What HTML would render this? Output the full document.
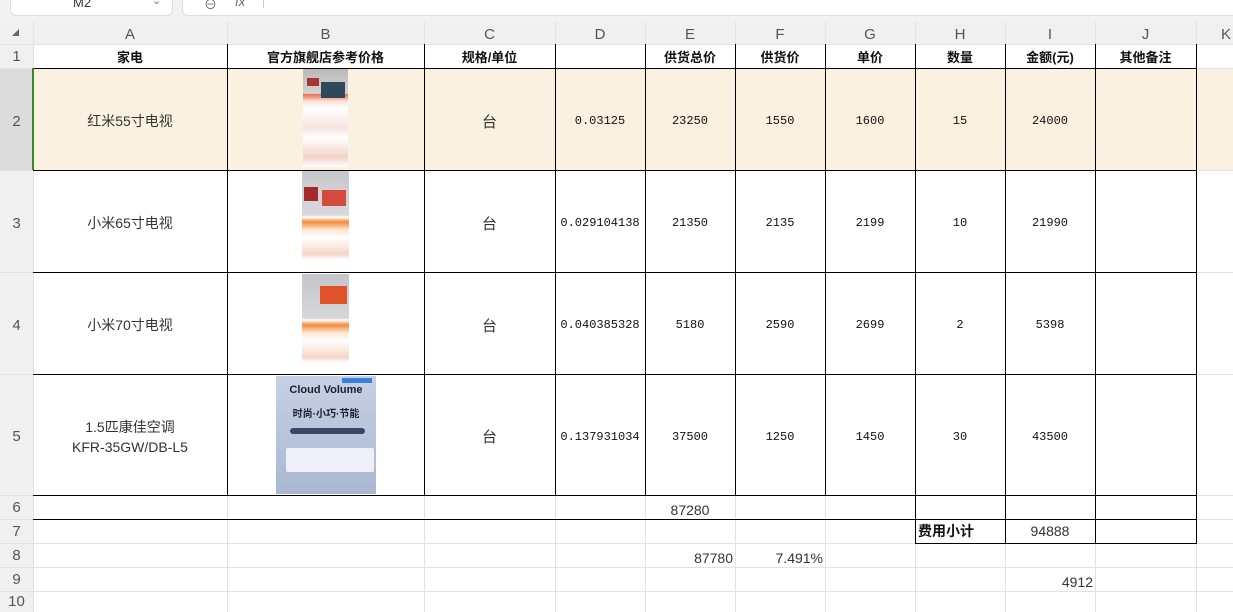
<!DOCTYPE html>
<html><head><meta charset="utf-8"><style>
body{margin:0;width:1233px;height:612px;overflow:hidden;background:#fff;position:relative;font-family:"Liberation Sans","Noto Sans CJK SC",sans-serif;}
.a{position:absolute}
.c{position:absolute;display:flex;align-items:center;justify-content:center;text-align:center;color:#222}
.gv{position:absolute;width:1px;background:#e2e2e2}
.gh{position:absolute;height:1px;background:#e2e2e2}
.bv{position:absolute;width:1px;background:#000}
.bh{position:absolute;height:1px;background:#000}
.hd{font-size:15px;color:#555;}
.h1{font-weight:bold;font-size:13px;color:#111}
.m{font-family:"Liberation Mono",monospace;font-size:12px;color:#111;padding-top:4px;box-sizing:border-box}
.n{font-size:14px;color:#333}
.d{padding-top:4px;box-sizing:border-box}
</style></head><body>
<div class="a" style="left:0;top:0;width:1233px;height:22px;background:#f2f2f2"></div>
<div class="a" style="left:10px;top:-6px;width:161px;height:20px;background:#fff;border:1px solid #ddd;border-radius:6px"></div>
<div class="a" style="left:73px;top:-5px;font-size:13px;color:#333">M2</div>
<div class="a" style="left:152px;top:-6px;font-size:11px;color:#777">⌄</div>
<div class="a" style="left:182px;top:-6px;width:1060px;height:20px;background:#fff;border:1px solid #ddd;border-radius:6px"></div>
<div class="a" style="left:204px;top:-6px;font-size:13px;color:#666">⊖</div>
<div class="a" style="left:235px;top:-6px;font-size:13px;color:#666;font-style:italic">fx</div>
<div class="a" style="left:263px;top:-2px;width:1px;height:10px;background:#ccc"></div>
<div class="a" style="left:0;top:22px;width:1233px;height:22px;background:#f0f0f0"></div>
<div class="a" style="left:0;top:44px;width:33px;height:568px;background:#f0f0f0"></div>
<div class="a" style="left:0;top:68px;width:33px;height:102px;background:#dcdcdc"></div>
<div class="a" style="left:33px;top:68px;width:1200px;height:102px;background:#faf1e0"></div>
<div class="a" style="left:12px;top:29px;width:0;height:0;border-left:7px solid transparent;border-bottom:7px solid #666"></div>
<div class="gv" style="left:33px;top:22px;height:590px"></div>
<div class="gv" style="left:227px;top:22px;height:590px"></div>
<div class="gv" style="left:424px;top:22px;height:590px"></div>
<div class="gv" style="left:555px;top:22px;height:590px"></div>
<div class="gv" style="left:645px;top:22px;height:590px"></div>
<div class="gv" style="left:735px;top:22px;height:590px"></div>
<div class="gv" style="left:825px;top:22px;height:590px"></div>
<div class="gv" style="left:915px;top:22px;height:590px"></div>
<div class="gv" style="left:1005px;top:22px;height:590px"></div>
<div class="gv" style="left:1095px;top:22px;height:590px"></div>
<div class="gv" style="left:1196px;top:22px;height:590px"></div>
<div class="gh" style="left:0;top:44px;width:1233px"></div>
<div class="gh" style="left:0;top:68px;width:1233px"></div>
<div class="gh" style="left:0;top:170px;width:1233px"></div>
<div class="gh" style="left:0;top:272px;width:1233px"></div>
<div class="gh" style="left:0;top:374px;width:1233px"></div>
<div class="gh" style="left:0;top:495px;width:1233px"></div>
<div class="gh" style="left:0;top:519px;width:1233px"></div>
<div class="gh" style="left:0;top:543px;width:1233px"></div>
<div class="gh" style="left:0;top:567px;width:1233px"></div>
<div class="gh" style="left:0;top:591px;width:1233px"></div>
<div class="bh" style="left:33px;top:68px;width:1164px"></div>
<div class="bh" style="left:33px;top:170px;width:1164px"></div>
<div class="bh" style="left:33px;top:272px;width:1164px"></div>
<div class="bh" style="left:33px;top:374px;width:1164px"></div>
<div class="bh" style="left:33px;top:495px;width:1164px"></div>
<div class="bh" style="left:33px;top:519px;width:1164px"></div>
<div class="bh" style="left:915px;top:543px;width:282px"></div>
<div class="bv" style="left:227px;top:44px;height:451px"></div>
<div class="bv" style="left:424px;top:44px;height:451px"></div>
<div class="bv" style="left:555px;top:44px;height:451px"></div>
<div class="bv" style="left:645px;top:44px;height:451px"></div>
<div class="bv" style="left:735px;top:44px;height:451px"></div>
<div class="bv" style="left:825px;top:44px;height:451px"></div>
<div class="bv" style="left:915px;top:44px;height:499px"></div>
<div class="bv" style="left:1005px;top:44px;height:499px"></div>
<div class="bv" style="left:1095px;top:44px;height:499px"></div>
<div class="bv" style="left:1196px;top:44px;height:499px"></div>
<div class="a" style="left:32px;top:68px;width:2px;height:102px;background:#3a8a2a"></div>
<div class="c hd" style="left:33px;top:23px;width:194px;height:22px">A</div>
<div class="c hd" style="left:227px;top:23px;width:197px;height:22px">B</div>
<div class="c hd" style="left:424px;top:23px;width:131px;height:22px">C</div>
<div class="c hd" style="left:555px;top:23px;width:90px;height:22px">D</div>
<div class="c hd" style="left:645px;top:23px;width:90px;height:22px">E</div>
<div class="c hd" style="left:735px;top:23px;width:90px;height:22px">F</div>
<div class="c hd" style="left:825px;top:23px;width:90px;height:22px">G</div>
<div class="c hd" style="left:915px;top:23px;width:90px;height:22px">H</div>
<div class="c hd" style="left:1005px;top:23px;width:90px;height:22px">I</div>
<div class="c hd" style="left:1095px;top:23px;width:101px;height:22px">J</div>
<div class="c hd" style="left:1196px;top:23px;width:60px;height:22px">K</div>
<div class="c hd" style="left:0;top:44px;width:33px;height:24px">1</div>
<div class="c hd d" style="left:0;top:68px;width:33px;height:102px">2</div>
<div class="c hd d" style="left:0;top:170px;width:33px;height:102px">3</div>
<div class="c hd d" style="left:0;top:272px;width:33px;height:102px">4</div>
<div class="c hd d" style="left:0;top:374px;width:33px;height:121px">5</div>
<div class="c hd" style="left:0;top:495px;width:33px;height:24px">6</div>
<div class="c hd" style="left:0;top:519px;width:33px;height:24px">7</div>
<div class="c hd" style="left:0;top:543px;width:33px;height:24px">8</div>
<div class="c hd" style="left:0;top:567px;width:33px;height:24px">9</div>
<div class="c hd" style="left:0;top:591px;width:33px;height:21px">10</div>
<div class="c h1" style="left:33px;top:44px;width:194px;height:24px">家电</div>
<div class="c h1" style="left:227px;top:44px;width:197px;height:24px">官方旗舰店参考价格</div>
<div class="c h1" style="left:424px;top:44px;width:131px;height:24px">规格/单位</div>
<div class="c h1" style="left:645px;top:44px;width:90px;height:24px">供货总价</div>
<div class="c h1" style="left:735px;top:44px;width:90px;height:24px">供货价</div>
<div class="c h1" style="left:825px;top:44px;width:90px;height:24px">单价</div>
<div class="c h1" style="left:915px;top:44px;width:90px;height:24px">数量</div>
<div class="c h1" style="left:1005px;top:44px;width:90px;height:24px">金额(元)</div>
<div class="c h1" style="left:1095px;top:44px;width:101px;height:24px">其他备注</div>
<div class="c n d" style="left:33px;top:68px;width:194px;height:102px">红米55寸电视</div>
<div class="c n d" style="left:33px;top:170px;width:194px;height:102px">小米65寸电视</div>
<div class="c n d" style="left:33px;top:272px;width:194px;height:102px">小米70寸电视</div>
<div class="c n d" style="left:33px;top:374px;width:194px;height:121px;line-height:20px">1.5匹康佳空调<br>KFR-35GW/DB-L5</div>
<div class="c n d" style="left:424px;top:68px;width:131px;height:102px;font-size:15px">台</div>
<div class="c n d" style="left:424px;top:170px;width:131px;height:102px;font-size:15px">台</div>
<div class="c n d" style="left:424px;top:272px;width:131px;height:102px;font-size:15px">台</div>
<div class="c n d" style="left:424px;top:374px;width:131px;height:121px;font-size:15px">台</div>
<div class="c m" style="left:555px;top:68px;width:90px;height:102px">0.03125</div>
<div class="c m" style="left:645px;top:68px;width:90px;height:102px">23250</div>
<div class="c m" style="left:735px;top:68px;width:90px;height:102px">1550</div>
<div class="c m" style="left:825px;top:68px;width:90px;height:102px">1600</div>
<div class="c m" style="left:915px;top:68px;width:90px;height:102px">15</div>
<div class="c m" style="left:1005px;top:68px;width:90px;height:102px">24000</div>
<div class="c m" style="left:555px;top:170px;width:90px;height:102px">0.029104138</div>
<div class="c m" style="left:645px;top:170px;width:90px;height:102px">21350</div>
<div class="c m" style="left:735px;top:170px;width:90px;height:102px">2135</div>
<div class="c m" style="left:825px;top:170px;width:90px;height:102px">2199</div>
<div class="c m" style="left:915px;top:170px;width:90px;height:102px">10</div>
<div class="c m" style="left:1005px;top:170px;width:90px;height:102px">21990</div>
<div class="c m" style="left:555px;top:272px;width:90px;height:102px">0.040385328</div>
<div class="c m" style="left:645px;top:272px;width:90px;height:102px">5180</div>
<div class="c m" style="left:735px;top:272px;width:90px;height:102px">2590</div>
<div class="c m" style="left:825px;top:272px;width:90px;height:102px">2699</div>
<div class="c m" style="left:915px;top:272px;width:90px;height:102px">2</div>
<div class="c m" style="left:1005px;top:272px;width:90px;height:102px">5398</div>
<div class="c m" style="left:555px;top:374px;width:90px;height:121px">0.137931034</div>
<div class="c m" style="left:645px;top:374px;width:90px;height:121px">37500</div>
<div class="c m" style="left:735px;top:374px;width:90px;height:121px">1250</div>
<div class="c m" style="left:825px;top:374px;width:90px;height:121px">1450</div>
<div class="c m" style="left:915px;top:374px;width:90px;height:121px">30</div>
<div class="c m" style="left:1005px;top:374px;width:90px;height:121px">43500</div>
<div class="a" style="left:303px;top:69px;width:45px;height:98px;background:linear-gradient(#b9b9bd 0,#d4d2d0 25%,#f06a4a 26%,#fde2da 33%,#fff 40%,#f5e5e0 60%,#fff 70%,#f4d2c8 90%,#fff 100%)"></div>
<div class="a" style="left:307px;top:78px;width:12px;height:8px;background:#a33"></div>
<div class="a" style="left:321px;top:82px;width:24px;height:16px;background:#2c4a5a"></div>
<div class="a" style="left:302px;top:171px;width:47px;height:98px;background:linear-gradient(#c8c8cc 0,#d8d8de 45%,#fff 47%,#f58a3a 52%,#fde7d5 60%,#fff 68%,#f5d6c6 85%,#fff 90%)"></div>
<div class="a" style="left:304px;top:187px;width:14px;height:14px;background:#a52a2a"></div>
<div class="a" style="left:322px;top:190px;width:24px;height:16px;background:#d54a3a"></div>
<div class="a" style="left:302px;top:274px;width:47px;height:98px;background:linear-gradient(#c4c6cc 0,#d6d6da 45%,#fff 47%,#f58a3a 52%,#fde7d5 60%,#fff 68%,#f5d6c6 85%,#fff 90%)"></div>
<div class="a" style="left:320px;top:286px;width:27px;height:18px;background:#e0522a"></div>
<div class="a" style="left:276px;top:376px;width:100px;height:118px;background:linear-gradient(#c7d1e4,#a9b7d1)"></div>
<div class="a" style="left:276px;top:384px;width:100px;text-align:center;font-size:11px;font-weight:bold;color:#1a1f2e">Cloud Volume</div>
<div class="a" style="left:276px;top:405px;width:100px;text-align:center;font-size:10px;font-weight:bold;color:#1a1f2e">时尚·小巧·节能</div>
<div class="a" style="left:290px;top:428px;width:75px;height:6px;background:#3a4563;border-radius:3px"></div>
<div class="a" style="left:342px;top:378px;width:30px;height:5px;background:#3b7fd8"></div>
<div class="a" style="left:286px;top:448px;width:88px;height:24px;background:#eef0f5;border-radius:2px"></div>
<div class="c n" style="left:645px;top:498px;width:90px;height:24px">87280</div>
<div class="c h1" style="left:915px;top:519px;width:90px;height:24px;font-size:14px;justify-content:flex-start;padding-left:3px;box-sizing:border-box">费用小计</div>
<div class="c n" style="left:1005px;top:519px;width:90px;height:24px">94888</div>
<div class="c n" style="left:645px;top:546px;width:88px;height:24px;justify-content:flex-end">87780</div>
<div class="c n" style="left:735px;top:546px;width:88px;height:24px;justify-content:flex-end">7.491%</div>
<div class="c n" style="left:1005px;top:570px;width:88px;height:24px;justify-content:flex-end">4912</div>
</body></html>
